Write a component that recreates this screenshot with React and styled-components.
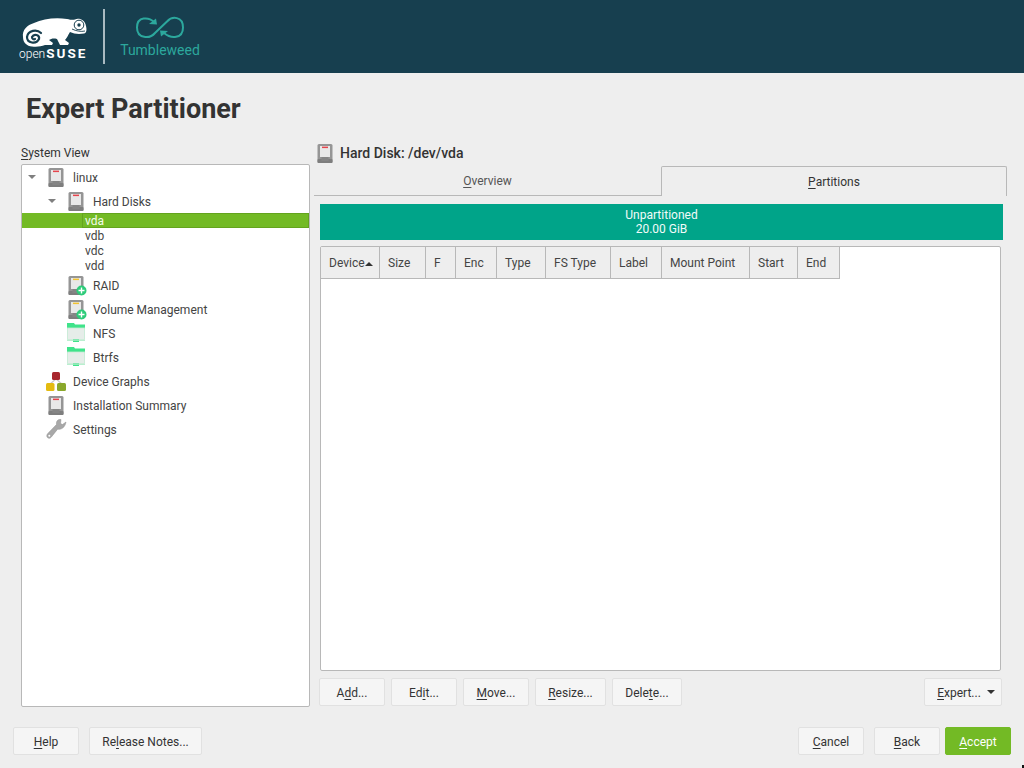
import React from "react";
import styled, { createGlobalStyle } from "styled-components";

const GlobalStyle = createGlobalStyle`
  html, body {
    margin: 0;
    padding: 0;
    background: #eeeeee;
  }
  body {
    font-family: Roboto, "Liberation Sans", sans-serif;
    font-size: 12px;
    color: #333333;
  }
`;

const Page = styled.div`
  position: relative;
  width: 1024px;
  height: 768px;
  display: flex;
  flex-direction: column;
  overflow: hidden;
  background: #eeeeee;
`;

const Banner = styled.header`
  height: 73px;
  flex: none;
  display: flex;
  align-items: center;
  background: #173f4f;
`;

const BrandLogo = styled.div`
  width: 84px;
  margin-left: 19px;
  display: flex;
  flex-direction: column;
`;

const BrandName = styled.div`
  height: 14px;
  margin-top: -1px;
  line-height: 14px;
  color: #ffffff;
  font-size: 12px;
  font-weight: 300;
  white-space: nowrap;
  b {
    margin-left: 1px;
    font-size: 13.5px;
    font-weight: 700;
    letter-spacing: 2px;
  }
`;

const BannerRule = styled.div`
  width: 2px;
  height: 55px;
  background: #a9bac1;
`;

const ProductLogo = styled.div`
  margin-left: 14px;
  width: 82px;
  display: flex;
  flex-direction: column;
  align-items: center;
`;

const ProductName = styled.div`
  margin-top: 2px;
  line-height: 16px;
  color: #2ca89d;
  font-size: 14px;
`;

const Title = styled.h1`
  height: 72px;
  flex: none;
  margin: 0;
  padding-left: 26px;
  box-sizing: border-box;
  line-height: 73px;
  font-size: 27px;
  font-weight: 700;
  color: #333333;
`;

const Workspace = styled.main`
  height: 562px;
  flex: none;
  display: flex;
  padding-left: 21px;
`;

const LeftColumn = styled.section`
  width: 289px;
  flex: none;
  display: flex;
  flex-direction: column;
`;

const FieldLabel = styled.div`
  height: 19px;
  line-height: 16px;
`;

const TreeBox = styled.div`
  flex: 1;
  background: #ffffff;
  border: 1px solid #b8b8b8;
  border-radius: 2px;
`;

const TreeRow = styled.div`
  height: 24px;
  display: flex;
  align-items: center;
  padding-left: ${(p) => p.$indent}px;
  color: #444444;
  white-space: nowrap;
`;

const TreeLabel = styled.span`
  padding-top: 2px;
`;

const ExpanderSlot = styled.span`
  width: 20px;
  flex: none;
  display: flex;
  justify-content: center;
`;

const Expander = styled.i`
  width: 0;
  height: 0;
  border-left: 4px solid transparent;
  border-right: 4px solid transparent;
  border-top: 4px solid #7f7f7f;
`;

const IconSlot = styled.span`
  width: 28px;
  height: 24px;
  margin-right: 3px;
  flex: none;
  display: flex;
  align-items: center;
  justify-content: center;
`;

const LeafRow = styled.div`
  height: 15px;
  line-height: 17px;
  box-sizing: border-box;
  padding-left: 63px;
  color: #444444;
  position: relative;
  ${(p) =>
    p.$selected &&
    `
    background: #73ba25;
    color: #f4faec;
    &::before {
      content: "";
      position: absolute;
      left: 60px;
      right: 0;
      top: 0;
      bottom: 0;
      border: 1px solid #64a41e;
    }
  `}
`;

const RightColumn = styled.section`
  width: 693px;
  margin-left: 4px;
  flex: none;
  display: flex;
  flex-direction: column;
`;

const DeviceHeading = styled.div`
  height: 16px;
  margin-bottom: 5px;
  padding-left: 1px;
  display: flex;
  align-items: center;
  gap: 5px;
  font-size: 14px;
  font-weight: 500;
  line-height: 16px;
  color: #333333;
`;

const TabBar = styled.div`
  height: 30px;
  flex: none;
  display: flex;
`;

const Tab = styled.div`
  width: ${(p) => p.$width}px;
  box-sizing: border-box;
  text-align: center;
  color: ${(p) => (p.$active ? "#333333" : "#555555")};
  line-height: 30px;
  ${(p) =>
    p.$active
      ? `
    border: 1px solid #b8b8b8;
    border-bottom: 0;
    border-radius: 2px 2px 0 0;
  `
      : `
    height: 30px;
    border-bottom: 1px solid #b8b8b8;
  `}
`;

const TabPane = styled.div`
  flex: 1;
  min-height: 0;
  padding: 8px 4px 0 6px;
  display: flex;
  flex-direction: column;
`;

const UsageBar = styled.div`
  height: 36px;
  flex: none;
  display: flex;
  flex-direction: column;
  align-items: center;
  justify-content: center;
  background: #00a489;
  color: #f2fbf9;
  line-height: 14px;
`;

const TableBox = styled.div`
  flex: 1;
  min-height: 0;
  margin: 6px 2px 0 0;
  background: #ffffff;
  border: 1px solid #b8b8b8;
  border-radius: 2px;
`;

const TableHead = styled.div`
  display: flex;
  height: 32px;
`;

const HeadCell = styled.div`
  width: ${(p) => p.$width}px;
  box-sizing: border-box;
  padding: 1px 0 0 8px;
  display: flex;
  align-items: center;
  background: #eeeeee;
  border-right: 1px solid #b8b8b8;
  border-bottom: 1px solid #b8b8b8;
  color: #444444;
  white-space: nowrap;
`;

const SortArrow = styled.i`
  width: 0;
  height: 0;
  margin-top: 1px;
  border-left: 4px solid transparent;
  border-right: 4px solid transparent;
  border-bottom: 4px solid #333333;
`;

const ActionRow = styled.div`
  height: 28px;
  margin: 7px 1px 1px -1px;
  flex: none;
  display: flex;
  justify-content: space-between;
`;

const ButtonGroup = styled.div`
  display: flex;
  gap: ${(p) => p.$gap || 6}px;
`;

const Button = styled.button`
  width: ${(p) => p.$width}px;
  height: 28px;
  padding: 2px 0 0;
  box-sizing: border-box;
  background: ${(p) => (p.$primary ? "#73ba25" : "#f5f5f5")};
  border: 1px solid ${(p) => (p.$primary ? "#73ba25" : "#e1e1e1")};
  border-radius: 2px;
  color: ${(p) => (p.$primary ? "#ffffff" : "#333333")};
  font-family: Roboto, "Liberation Sans", sans-serif;
  font-size: 12px;
  display: flex;
  align-items: center;
  justify-content: center;
`;

const MenuButton = styled(Button)`
  padding-left: 6px;
`;

const MenuCaret = styled.i`
  width: 0;
  height: 0;
  margin: -2px 0 0 6px;
  border-left: 4px solid transparent;
  border-right: 4px solid transparent;
  border-top: 4px solid #333333;
`;

const Footer = styled.footer`
  margin-top: 20px;
  padding: 0 13px;
  display: flex;
  justify-content: space-between;
`;

const FooterNav = styled.div`
  display: flex;
  gap: 5px;
`;

const Key = styled.span`
  text-decoration: underline;
  text-underline-offset: 2px;
`;

const PointerTip = styled.i`
  position: absolute;
  left: 1022px;
  top: 765px;
  width: 2px;
  height: 3px;
  background: #111111;
`;

const DiskSvg = styled.svg`
  flex: none;
  overflow: visible;
`;

function ChameleonLogo() {
  return (
    <svg width="70" height="33" viewBox="18 12 70 33">
      <path
        fill="#ffffff"
        d="M22 35 C21 28 26 23 33 21 C42 17 54 15 66 17 C70 18 72 18 74 17.5 C78 15.5 84 18 85 24 C86 28 85.5 31 83 31.5 C78 32.5 73 32 69 30 C67 33 66 36 64 38 L68 41 L67 43 L59 43 L56 37 C52 36 50 37 48 38 L52 41 L51 43 L44 43 C40 44.5 36 45 31 44.5 C26 44 22 41 22 35 Z"
      />
      <path
        fill="none"
        stroke="#173f4f"
        strokeWidth="2.2"
        strokeLinecap="round"
        d="M40 31 C36 27 27 28 26 35 C26 41 35 43 38 37 C39 33 33 31 31 35 C31 37 33 38 34 37"
      />
      <circle cx="78" cy="23" r="4.8" fill="none" stroke="#173f4f" strokeWidth="1" />
      <circle cx="78" cy="23" r="1.7" fill="#173f4f" />
      <path fill="none" stroke="#173f4f" strokeWidth="0.9" d="M71 27 C75 29 80 30 84 29" />
    </svg>
  );
}

function InfinityLogo() {
  return (
    <svg width="50" height="24" viewBox="136 16 50 24">
      <path
        fill="none"
        stroke="#2ca89d"
        strokeWidth="2"
        d="M155 22 C150 17 138 16 138 27.5 C138 39 151 39 156 33 L168 21.5 C173 16 184 16 184 27.5 C184 39 172 39 165 33"
      />
      <path fill="#2ca89d" d="M150 24 L158 24.5 L157 18.5 Z" />
      <path fill="#2ca89d" d="M169 31 L161 30.5 L162 36.5 Z" />
    </svg>
  );
}

function DiskIcon({ stripe = "#e5454d", badge }) {
  return (
    <DiskSvg width="20" height="24" viewBox="0 0 20 24">
      <rect x="2.5" y="3" width="15" height="19" rx="1.5" fill="#959595" />
      <rect x="2.5" y="18" width="15" height="4" rx="1" fill="#7e7e7e" />
      <rect x="5" y="5" width="10" height="11" fill="#e8e8e8" />
      <rect x="7" y="5.6" width="6" height="1.5" fill={stripe} />
      <rect x="6.5" y="16" width="7" height="4" fill="#858585" />
      {badge && (
        <>
          <circle cx="15.5" cy="17.5" r="5" fill="#2ecc7a" />
          <path d="M15.5 14.5 V20.5 M12.5 17.5 H18.5" stroke="#ffffff" strokeWidth="1.4" />
        </>
      )}
    </DiskSvg>
  );
}

function FolderIcon() {
  return (
    <svg width="20" height="20" viewBox="0 0 20 20">
      <path d="M1 0 H8 L9 1.5 H19 V6 H1 Z" fill="#3fe38a" />
      <rect x="1.4" y="5" width="17.2" height="11.5" fill="#e6ede9" stroke="#c4ead3" strokeWidth="0.8" />
      <rect x="7" y="16.5" width="6" height="2.5" fill="#3fe38a" />
      <rect x="1" y="17" width="18" height="0.8" fill="#a8ecc4" />
    </svg>
  );
}

function GraphIcon() {
  return (
    <svg width="22" height="22" viewBox="0 0 22 22">
      <path d="M11 9 L5 14 M11 9 L17 14" stroke="#c9c9c9" strokeWidth="1.2" />
      <rect x="7" y="2" width="8" height="8" rx="1.5" fill="#a8262e" />
      <rect x="1" y="13" width="8.5" height="8" rx="1.5" fill="#e4bb10" />
      <rect x="12" y="13" width="9" height="8" rx="1.5" fill="#8aa82c" />
    </svg>
  );
}

function WrenchIcon() {
  return (
    <svg width="22" height="22" viewBox="0 0 22 22">
      <path
        d="M21 4 L17.5 6.5 L15.5 5.5 L16 1.5 C13 1 11 3 11.5 6.5 L2.8 15.5 C1.5 17 1.5 18.5 2.5 19.6 C3.6 20.7 5 20.6 6.2 19.2 L12.6 11.2 C16.5 11.8 20 9.5 21 4 Z"
        fill="#a8a8a8"
        stroke="#8f8f8f"
        strokeWidth="0.5"
      />
      <circle cx="4.3" cy="17.8" r="1" fill="#ffffff" />
    </svg>
  );
}

const HEAD_COLUMNS = [
  ["Device", 59],
  ["Size", 46],
  ["F", 30],
  ["Enc", 41],
  ["Type", 49],
  ["FS Type", 65],
  ["Label", 51],
  ["Mount Point", 88],
  ["Start", 48],
  ["End", 42],
];

function NodeRow({ indent, expandable, icon, children }) {
  return (
    <TreeRow $indent={indent}>
      <ExpanderSlot>{expandable && <Expander />}</ExpanderSlot>
      <IconSlot>{icon}</IconSlot>
      <TreeLabel>{children}</TreeLabel>
    </TreeRow>
  );
}

export default function App() {
  return (
    <Page>
      <GlobalStyle />
      <Banner>
        <BrandLogo>
          <ChameleonLogo />
          <BrandName>
            open<b>SUSE</b>
          </BrandName>
        </BrandLogo>
        <BannerRule />
        <ProductLogo>
          <InfinityLogo />
          <ProductName>Tumbleweed</ProductName>
        </ProductLogo>
      </Banner>

      <Title>Expert Partitioner</Title>

      <Workspace>
        <LeftColumn>
          <FieldLabel>
            <Key>S</Key>ystem View
          </FieldLabel>
          <TreeBox>
            <NodeRow indent={0} expandable icon={<DiskIcon />}>linux</NodeRow>
            <NodeRow indent={20} expandable icon={<DiskIcon />}>Hard Disks</NodeRow>
            <LeafRow $selected>vda</LeafRow>
            <LeafRow>vdb</LeafRow>
            <LeafRow>vdc</LeafRow>
            <LeafRow>vdd</LeafRow>
            <NodeRow indent={20} icon={<DiskIcon stripe="#f2c230" badge />}>RAID</NodeRow>
            <NodeRow indent={20} icon={<DiskIcon stripe="#f2c230" badge />}>Volume Management</NodeRow>
            <NodeRow indent={20} icon={<FolderIcon />}>NFS</NodeRow>
            <NodeRow indent={20} icon={<FolderIcon />}>Btrfs</NodeRow>
            <NodeRow indent={0} icon={<GraphIcon />}>Device Graphs</NodeRow>
            <NodeRow indent={0} icon={<DiskIcon />}>Installation Summary</NodeRow>
            <NodeRow indent={0} icon={<WrenchIcon />}>Settings</NodeRow>
          </TreeBox>
        </LeftColumn>

        <RightColumn>
          <DeviceHeading>
            <DiskIcon />
            Hard Disk: /dev/vda
          </DeviceHeading>
          <TabBar>
            <Tab $width={347}>
              <Key>O</Key>verview
            </Tab>
            <Tab $width={346} $active>
              <Key>P</Key>artitions
            </Tab>
          </TabBar>
          <TabPane>
            <UsageBar>
              <span>Unpartitioned</span>
              <span>20.00 GiB</span>
            </UsageBar>
            <TableBox>
              <TableHead>
                {HEAD_COLUMNS.map(([name, width]) => (
                  <HeadCell key={name} $width={width}>
                    {name}
                    {name === "Device" && <SortArrow />}
                  </HeadCell>
                ))}
              </TableHead>
            </TableBox>
            <ActionRow>
              <ButtonGroup>
                <Button $width={66}>A<Key>d</Key>d...</Button>
                <Button $width={66}>Ed<Key>i</Key>t...</Button>
                <Button $width={66}><Key>M</Key>ove...</Button>
                <Button $width={71}><Key>R</Key>esize...</Button>
                <Button $width={70}>Dele<Key>t</Key>e...</Button>
              </ButtonGroup>
              <MenuButton $width={78}>
                <Key>E</Key>xpert...
                <MenuCaret />
              </MenuButton>
            </ActionRow>
          </TabPane>
        </RightColumn>
      </Workspace>

      <Footer>
        <ButtonGroup $gap={10}>
          <Button $width={66}><Key>H</Key>elp</Button>
          <Button $width={113}>Re<Key>l</Key>ease Notes...</Button>
        </ButtonGroup>
        <ButtonGroup $gap={10}>
          <Button $width={66}><Key>C</Key>ancel</Button>
          <FooterNav>
            <Button $width={66}><Key>B</Key>ack</Button>
            <Button $width={66} $primary><Key>A</Key>ccept</Button>
          </FooterNav>
        </ButtonGroup>
      </Footer>
      <PointerTip />
    </Page>
  );
}
